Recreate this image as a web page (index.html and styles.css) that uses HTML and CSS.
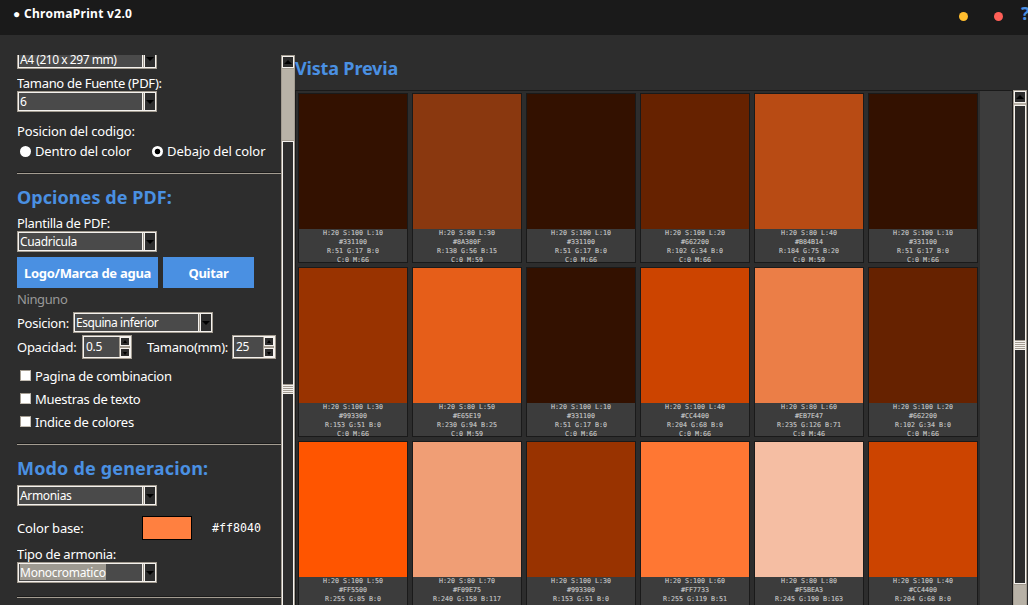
FILE: index.html
```
<!DOCTYPE html>
<html lang="es">
<head>
    <meta charset="utf-8">
    <title>ChromaPrint v2.0</title>
    <link rel="stylesheet" href="styles.css">
</head>
<body>
    <header class="titlebar">
        <span class="title">&#9679; <b>ChromaPrint v2.0</b></span>
        <span class="dot yellow"></span>
        <span class="dot red"></span>
        <span class="help">?</span>
    </header>
    <main class="main">
        <section class="sidebar">
            <div class="combo first"><span>A4 (210 x 297 mm)</span><i></i></div>
            <div class="label size-label"><span class="t-size">Tamano de Fuente (PDF):</span></div>
            <div class="combo"><span>6</span><i></i></div>
            <div class="label code-label"><span class="t-code">Posicion del codigo:</span></div>
            <div class="radios">
                <b class="radio"></b><span class="t-in">Dentro del color</span>
                <b class="radio on"></b><span class="t-under">Debajo del color</span>
            </div>
            <hr>
            <h2><span class="t-pdf">Opciones de PDF:</span></h2>
            <div class="label template-label"><span class="t-template">Plantilla de PDF:</span></div>
            <div class="combo"><span>Cuadricula</span><i></i></div>
            <div class="buttons">
                <button class="logo">Logo/Marca de agua</button>
                <button class="remove">Quitar</button>
            </div>
            <div class="label none">Ninguno</div>
            <div class="row position">
                <span class="t-pos">Posicion:</span>
                <div class="combo"><span>Esquina inferior</span><i></i></div>
            </div>
            <div class="row numbers">
                <span class="t-opacity">Opacidad:</span>
                <div class="spin wide"><span>0.5</span><div><i class="up"></i><i></i></div></div>
                <span class="t-mm">Tamano(mm):</span>
                <div class="spin"><span>25</span><div><i class="up"></i><i></i></div></div>
            </div>
            <div class="check"><b></b><span class="t-page">Pagina de combinacion</span></div>
            <div class="check"><b></b><span class="t-samples">Muestras de texto</span></div>
            <div class="check"><b></b><span class="t-index">Indice de colores</span></div>
            <hr class="second">
            <h2 class="mode"><span class="t-mode">Modo de generacion:</span></h2>
            <div class="combo"><span>Armonias</span><i></i></div>
            <div class="row base">
                <span class="t-base">Color base:</span>
                <div class="base-color"></div>
                <code>#ff8040</code>
            </div>
            <div class="label type-label"><span class="t-type">Tipo de armonia:</span></div>
            <div class="combo"><span><mark>Monocromatico</mark></span><i></i></div>
            <hr class="third">
        </section>
        <div class="scrollbar left">
            <div class="arrow"></div>
            <div class="trough"></div>
            <div class="slider"><div class="grip"></div></div>
        </div>
        <section class="preview">
            <h2><span class="t-preview">Vista Previa</span></h2>
            <div class="preview-body">
                <div class="canvas"><div class="grid" id="grid"></div></div>
                <div class="scrollbar right">
                    <div class="arrow"></div>
                    <div class="slider"><div class="grip"></div></div>
                    <div class="trough"></div>
                </div>
            </div>
        </section>
    </main>

    <script>
        const grid = document.querySelector("#grid");
        // h/s/l, hex, rgb, start of cmyk
        const colors = [
            ["H:20 S:100 L:10", "#331100", "R:51 G:17 B:0", "C:0 M:66"],
            ["H:20 S:80 L:30", "#8A380F", "R:138 G:56 B:15", "C:0 M:59"],
            ["H:20 S:100 L:10", "#331100", "R:51 G:17 B:0", "C:0 M:66"],
            ["H:20 S:100 L:20", "#662200", "R:102 G:34 B:0", "C:0 M:66"],
            ["H:20 S:80 L:40", "#B84B14", "R:184 G:75 B:20", "C:0 M:59"],
            ["H:20 S:100 L:10", "#331100", "R:51 G:17 B:0", "C:0 M:66"],
            ["H:20 S:100 L:30", "#993300", "R:153 G:51 B:0", "C:0 M:66"],
            ["H:20 S:80 L:50", "#E65E19", "R:230 G:94 B:25", "C:0 M:59"],
            ["H:20 S:100 L:10", "#331100", "R:51 G:17 B:0", "C:0 M:66"],
            ["H:20 S:100 L:40", "#CC4400", "R:204 G:68 B:0", "C:0 M:66"],
            ["H:20 S:80 L:60", "#EB7E47", "R:235 G:126 B:71", "C:0 M:46"],
            ["H:20 S:100 L:20", "#662200", "R:102 G:34 B:0", "C:0 M:66"],
            ["H:20 S:100 L:50", "#FF5500", "R:255 G:85 B:0"],
            ["H:20 S:80 L:70", "#F09E75", "R:240 G:158 B:117"],
            ["H:20 S:100 L:30", "#993300", "R:153 G:51 B:0"],
            ["H:20 S:100 L:60", "#FF7733", "R:255 G:119 B:51"],
            ["H:20 S:80 L:80", "#F5BEA3", "R:245 G:190 B:163"],
            ["H:20 S:100 L:40", "#CC4400", "R:204 G:68 B:0"]
        ];

        colors.forEach((lines) => {
            let card = document.createElement("div");
            card.className = "card";
            card.innerHTML = `<div class="swatch" style="background:${lines[1]}"></div>`
                + `<div class="codes">${lines.join("<br>")}</div>`;
            grid.appendChild(card);
        });
    </script>
</body>
</html>
```
FILE: styles.css
```
* {
    box-sizing: border-box;
}
body {
    margin: 0;
    width: 1028px;
    height: 605px;
    overflow: hidden;
    background: #2d2d2d;
    color: #fff;
    font: 13px "Noto Sans", sans-serif;
    letter-spacing: -0.27px;
    white-space: nowrap;
}
.titlebar {
    display: flex;
    height: 35px;
    background: #1a1a1a;
    overflow: hidden;
}
.title {
    width: 959px;
    flex: none;
    padding-left: 13px;
    font-size: 12px;
    line-height: 28px;
    letter-spacing: 0.3px;
}
.dot {
    width: 9px;
    height: 9px;
    flex: none;
    margin-top: 12px;
    border-radius: 50%;
}
.yellow {
    background: #ffbd2e;
}
.red {
    background: #ff5f57;
    margin-left: 26px;
}
.help {
    margin-left: 18px;
    color: #4a90e2;
    font-size: 18px;
    font-weight: bold;
    line-height: 27px;
}
.main {
    display: flex;
    height: 570px;
}
.sidebar {
    width: 264px;
    height: 550px;
    flex: none;
    margin: 20px 0 0 17px;
    overflow: hidden;
}
.combo {
    display: flex;
    width: 140px;
    height: 21px;
    border: 1px solid #a39c91;
    outline: 1px solid #f5f2ee;
    outline-offset: -2px;
    background: #4a4a4a;
    font-size: 12px;
    line-height: 20px;
    letter-spacing: -0.33px;
}
.combo span {
    flex: 1;
    padding-left: 2px;
}
.combo > i {
    width: 13px;
    border-left: 1px solid #a39c91;
    box-shadow: -1px 0 #f5f2ee, inset 1px 0 #f5f2ee;
    background: #2d2d2d;
}
.combo > i::before {
    content: "";
    display: block;
    margin: 8px 0 0 2px;
    border: 4px solid transparent;
    border-top-color: #000;
    border-bottom: 0;
    width: 0;
}
.first {
    margin-top: -7px;
    line-height: 21px;
    letter-spacing: -0.46px;
}
mark {
    display: inline-block;
    height: 16px;
    line-height: 18px;
    margin-top: 1px;
    background: #9e9a91;
    color: #fff;
    vertical-align: top;
    letter-spacing: -0.25px;
}
.label {
    height: 22px;
    line-height: 29px;
}
.t-size, .t-template, .t-mm {
    letter-spacing: -0.32px;
}
.t-code, .t-in, .t-base {
    letter-spacing: -0.16px;
}
.t-under {
    letter-spacing: -0.07px;
}
.code-label {
    height: 28px;
    line-height: 39px;
}
.radios {
    display: flex;
    align-items: center;
    height: 23px;
    margin-bottom: 9px;
}
.radio {
    width: 11px;
    height: 11px;
    margin: 0 4px 1px 3px;
    border-radius: 50%;
    background: #fff;
}
.radios span {
    line-height: 22px;
    height: 23px;
}
.radio.on {
    margin-left: 21px;
    background: radial-gradient(#000 2.4px, #fff 3.2px);
}
hr {
    height: 2px;
    margin: 8px 0 0;
    border: 0;
    border-top: 1px solid #1a1a1a;
    background: #a39c91;
}
h2 {
    margin: 0;
    color: #4a90e2;
    font-size: 18px;
    font-weight: bold;
}
.sidebar h2 {
    height: 41px;
    line-height: 46px;
}
.t-pdf {
    letter-spacing: 0.06px;
}
.t-mode {
    letter-spacing: 0.17px;
}
.t-preview {
    letter-spacing: -0.17px;
}
.template-label {
    height: 16px;
    line-height: 17px;
}
.buttons {
    display: flex;
    gap: 5px;
    margin-top: 5px;
}
button {
    height: 31px;
    padding: 0;
    border: 0;
    background: #4a90e2;
    color: #fff;
    font: bold 13px "Noto Sans", sans-serif;
    letter-spacing: -0.28px;
    white-space: nowrap;
}
.logo {
    width: 141px;
}
.remove {
    width: 91px;
}
.none {
    height: 24px;
    line-height: 23px;
    letter-spacing: -0.4px;
    color: #999;
}
.row {
    display: flex;
    align-items: center;
}
.position {
    height: 21px;
}
.position > span {
    width: 56px;
}
.position .combo {
    letter-spacing: -0.44px;
}
.numbers {
    height: 24px;
    margin: 2px 0 5px;
}
.numbers .t-opacity {
    width: 65px;
}
.numbers .t-mm {
    width: 85px;
}
.spin {
    display: flex;
    width: 44px;
    height: 24px;
    border: 1px solid #a39c91;
    outline: 1px solid #f5f2ee;
    outline-offset: -2px;
    background: #4a4a4a;
    font-size: 12px;
    line-height: 21px;
}
.spin.wide {
    width: 50px;
    margin-right: 15px;
}
.spin span {
    flex: 1;
    padding-left: 3px;
}
.spin > div {
    width: 10px;
    margin-right: 1px;
}
.spin i {
    display: block;
    height: 9px;
    margin-top: 1px;
    border: 1px solid #f5f2ee;
    outline: 1px solid #a39c91;
    outline-offset: 0;
    background: #2d2d2d;
}
.spin .up {
    margin-bottom: 2px;
}
.spin i::before {
    content: "";
    display: block;
    width: 0;
    margin: 3px 0 0 1.5px;
    border: 2.5px solid transparent;
    border-top: 3px solid #000;
    border-bottom: 0;
}
.spin .up::before {
    margin-top: 2px;
    border-top: 0;
    border-bottom: 3px solid #000;
}
.check {
    display: flex;
    align-items: center;
    height: 23px;
}
.check b {
    width: 11px;
    height: 11px;
    margin: 0 4px 1px 3px;
    background: #fff;
    border: 1px solid #c4beb4;
    border-top-color: #a39c91;
    border-left-color: #a39c91;
}
.second {
    margin-top: 10px;
}
.sidebar h2.mode {
    height: 40px;
}
.base {
    height: 44px;
}
.base .t-base {
    width: 125px;
}
.base-color {
    width: 50px;
    height: 24px;
    border: 1px solid #000;
    background: #ff8040;
}
code {
    margin-left: 20px;
    font: 11.6px "DejaVu Sans Mono", monospace;
    letter-spacing: 0;
}
.type-label {
    height: 12px;
    line-height: 8px;
}
.third {
    margin-top: 13px;
}
.scrollbar {
    display: flex;
    flex-direction: column;
    width: 14px;
    flex: none;
    background: #b8b2a7;
    border: 1px solid #a39c91;
    border-bottom: 0;
}
.scrollbar.left {
    margin-top: 20px;
}
.arrow {
    height: 12px;
    flex: none;
    border: 1px solid #f5f2ee;
    background: #2d2d2d;
}
.arrow::before {
    content: "";
    display: block;
    width: 0;
    margin: 3px 0 0 1px;
    border: 4px solid transparent;
    border-bottom-color: #000;
    border-top: 0;
}
.left .trough {
    height: 73px;
    border-top: 1px solid #a39c91;
    border-bottom: 1px solid #a39c91;
}
.slider {
    flex: 1;
    border: 1px solid #f5f2ee;
    border-bottom: 0;
    background: #2d2d2d;
}
.grip {
    height: 10px;
    margin-top: 242px;
    background: repeating-linear-gradient(#a39c91 0 1px, #f5f2ee 1px 2px);
}
.preview {
    flex: 1;
}
.preview h2 {
    height: 55px;
    line-height: 66px;
}
.preview-body {
    display: flex;
    height: 515px;
}
.canvas {
    width: 718px;
    height: 515px;
    overflow: hidden;
    border: 1px solid #1a1a1a;
    border-bottom: 0;
    background: #3c3c3c;
}
.grid {
    display: grid;
    grid-template-columns: repeat(6, 110px);
    grid-auto-rows: 170px;
    gap: 4px;
    width: 684px;
    padding: 2px;
    background: #2d2d2d;
}
.card {
    overflow: hidden;
    border: 1px solid #1a1a1a;
    background: #3c3c3c;
}
.swatch {
    height: 135px;
}
.codes {
    color: #ccc;
    font: 6.67px/9px "DejaVu Sans Mono", monospace;
    letter-spacing: 0;
    text-align: center;
    -webkit-text-stroke: 0.1px #ccc;
}
.right .arrow {
    margin-bottom: 2px;
}
.right .slider {
    flex: none;
    height: 479px;
    border-bottom: 1px solid #f5f2ee;
}
.right .trough {
    flex: 1;
    border-top: 1px solid #a39c91;
}
.right .grip {
    margin-top: 234px;
}
```
